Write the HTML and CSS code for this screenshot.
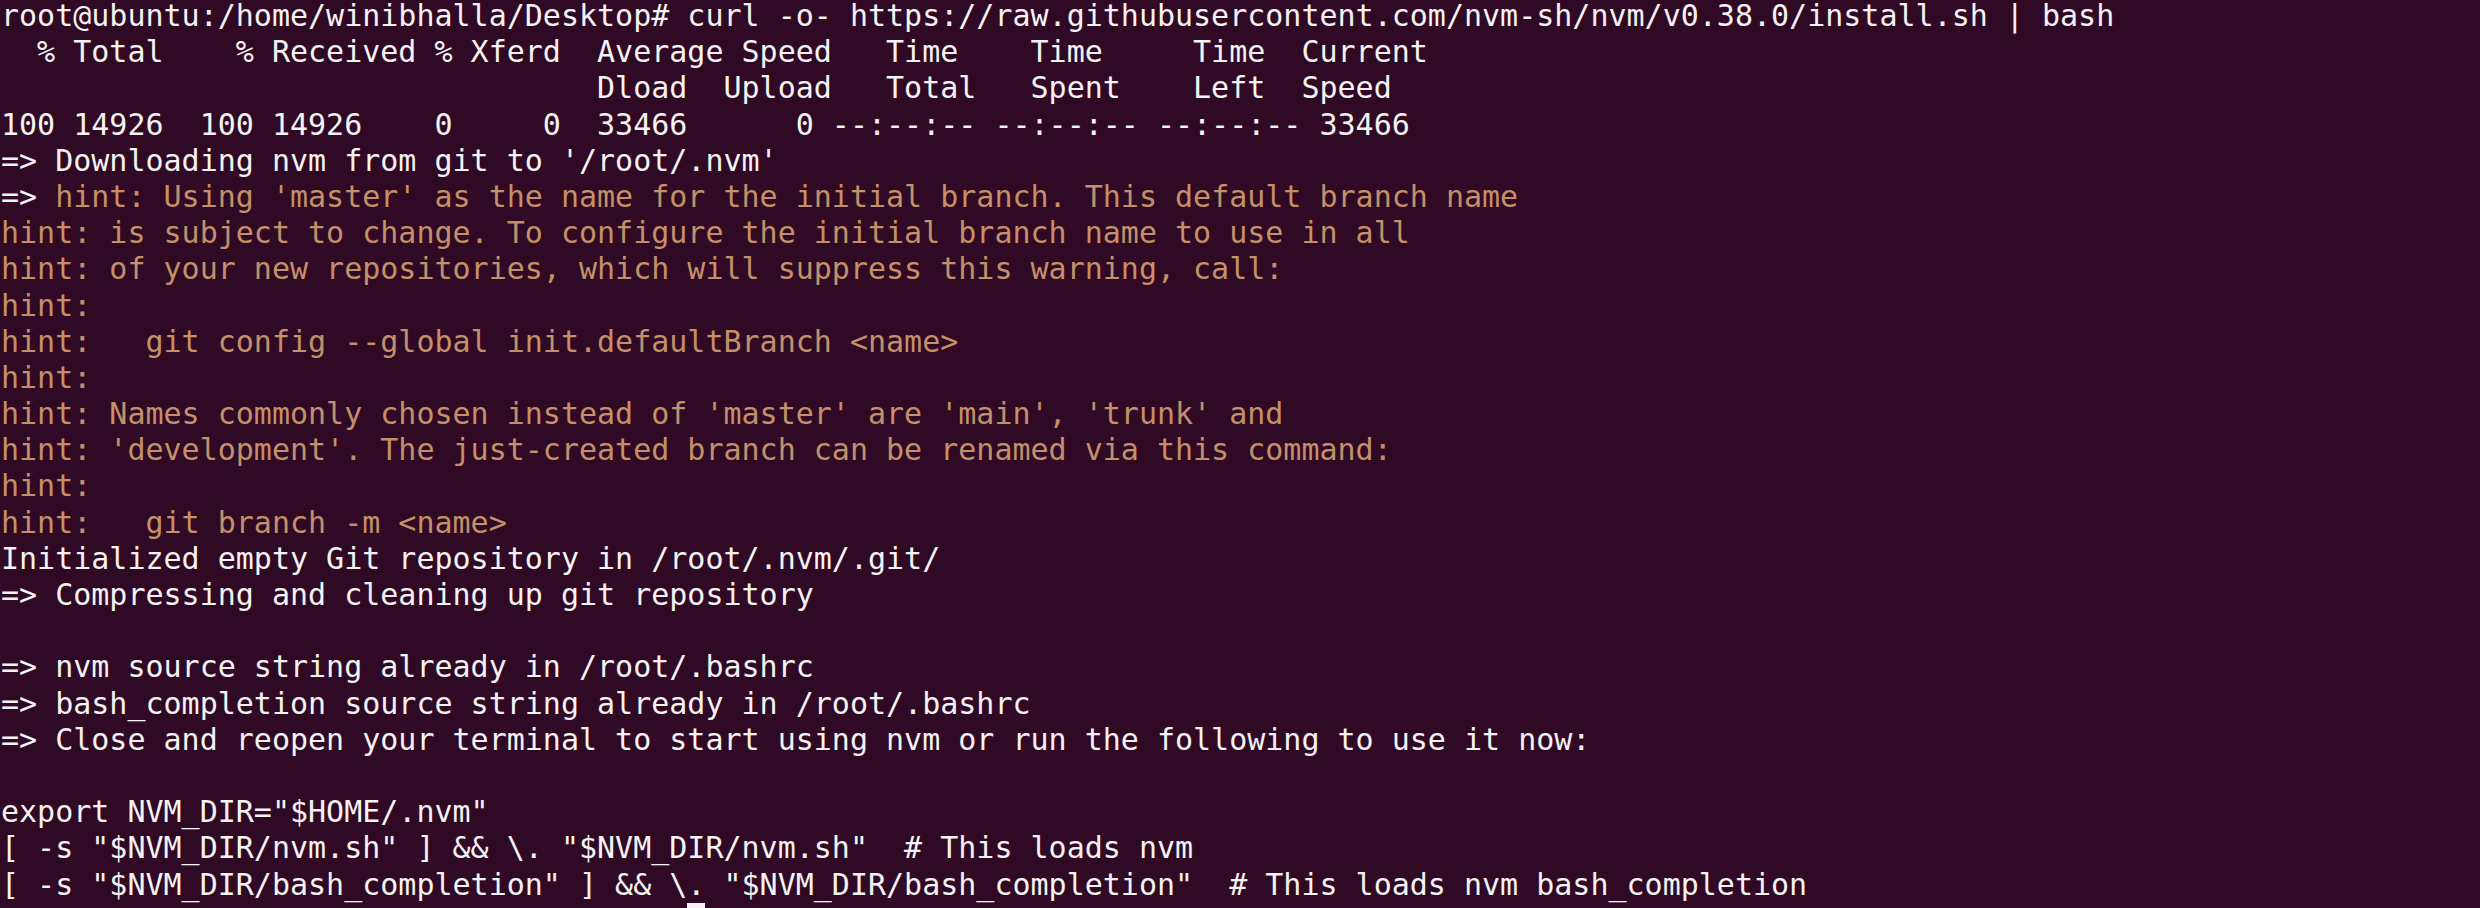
FILE: index.html
```html
<!DOCTYPE html>
<html lang="en">
<head>
<meta charset="utf-8">
<title>Terminal</title>
<link rel="stylesheet" href="styles.css">
</head>
<body>
<main class="terminal">
<div class="line">root@ubuntu:/home/winibhalla/Desktop# curl -o- https://raw.githubusercontent.com/nvm-sh/nvm/v0.38.0/install.sh | bash</div>
<div class="line">  % Total    % Received % Xferd  Average Speed   Time    Time     Time  Current</div>
<div class="line">                                 Dload  Upload   Total   Spent    Left  Speed</div>
<div class="line">100 14926  100 14926    0     0  33466      0 --:--:-- --:--:-- --:--:-- 33466</div>
<div class="line">=&gt; Downloading nvm from git to '/root/.nvm'</div>
<div class="line">=&gt; <span class="hint">hint: Using 'master' as the name for the initial branch. This default branch name</span></div>
<div class="line hint">hint: is subject to change. To configure the initial branch name to use in all</div>
<div class="line hint">hint: of your new repositories, which will suppress this warning, call:</div>
<div class="line hint">hint:</div>
<div class="line hint">hint:   git config --global init.defaultBranch &lt;name&gt;</div>
<div class="line hint">hint:</div>
<div class="line hint">hint: Names commonly chosen instead of 'master' are 'main', 'trunk' and</div>
<div class="line hint">hint: 'development'. The just-created branch can be renamed via this command:</div>
<div class="line hint">hint:</div>
<div class="line hint">hint:   git branch -m &lt;name&gt;</div>
<div class="line">Initialized empty Git repository in /root/.nvm/.git/</div>
<div class="line">=&gt; Compressing and cleaning up git repository</div>
<div class="line"> </div>
<div class="line">=&gt; nvm source string already in /root/.bashrc</div>
<div class="line">=&gt; bash_completion source string already in /root/.bashrc</div>
<div class="line">=&gt; Close and reopen your terminal to start using nvm or run the following to use it now:</div>
<div class="line"> </div>
<div class="line">export NVM_DIR="$HOME/.nvm"</div>
<div class="line">[ -s "$NVM_DIR/nvm.sh" ] &amp;&amp; \. "$NVM_DIR/nvm.sh"  # This loads nvm</div>
<div class="line">[ -s "$NVM_DIR/bash_completion" ] &amp;&amp; \. "$NVM_DIR/bash_completion"  # This loads nvm bash_completion</div>
<div class="line"><span class="cursor"></span></div>
</main>
</body>
</html>
```

FILE: styles.css
```css
html, body {
  margin: 0;
  padding: 0;
  height: 908px;
  overflow: hidden;
  background: #300a24;
}

.terminal {
  display: flex;
  flex-direction: column;
  padding: 0 0 0 1px;
  margin-top: -2px;
  font-family: "DejaVu Sans Mono", "Liberation Mono", monospace;
  font-size: 30px;
  line-height: 36.2px;
  color: #f4f2f3;
}

.line {
  height: 36.2px;
  flex-shrink: 0;
  white-space: pre;
}

.hint {
  color: #c39069;
}

.cursor {
  display: inline-block;
  width: 1ch;
  height: 36px;
  margin-left: 38ch;
  background: #f4f2f3;
  vertical-align: top;
}
```
